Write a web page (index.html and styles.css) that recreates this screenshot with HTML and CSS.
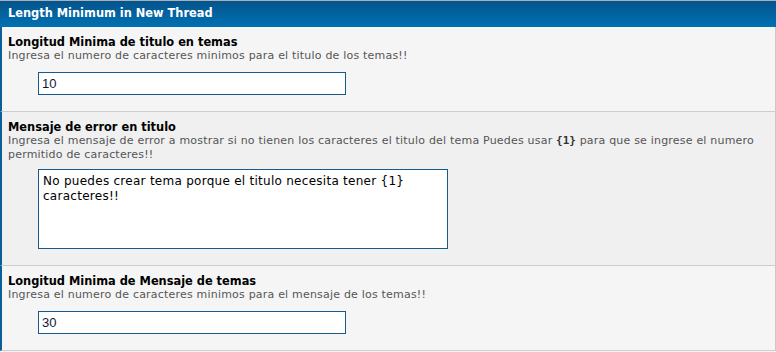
FILE: index.html
```html
<!DOCTYPE html>
<html>
<head>
<meta charset="utf-8">
<link rel="stylesheet" href="styles.css">
</head>
<body>
<div class="panel">
  <div class="panel-head">Length Minimum in New Thread</div>
  <div class="row row-light">
    <div class="row-title">Longitud Minima de titulo en temas</div>
    <div class="row-desc">Ingresa el numero de caracteres minimos para el titulo de los temas!!</div>
    <input class="field" type="text" value="10">
  </div>
  <div class="row row-dark">
    <div class="row-title">Mensaje de error en titulo</div>
    <div class="row-desc"><span>Ingresa el mensaje de error a mostrar si no tienen los caracteres el titulo del tema Puedes usar <b class="code">{1}</b> para que se ingrese el numero</span><br><span>permitido de caracteres!!</span></div>
    <textarea class="area">No puedes crear tema porque el titulo necesita tener {1} caracteres!!</textarea>
  </div>
  <div class="row row-light">
    <div class="row-title">Longitud Minima de Mensaje de temas</div>
    <div class="row-desc">Ingresa el numero de caracteres minimos para el mensaje de los temas!!</div>
    <input class="field" type="text" value="30">
  </div>
</div>
</body>
</html>
```
FILE: styles.css
```css
html, body {
  margin: 0;
  padding: 0;
  background: #f3f3f3;
}
.panel {
  width: 776px;
  border-top: 1px solid #a9b0b8;
  font-family: "DejaVu Sans", Verdana, sans-serif;
  color: #000;
}
.panel-head {
  height: 26px;
  line-height: 25px;
  padding-left: 8px;
  font-size: 11.4px;
  font-weight: bold;
  color: #fff;
  background: linear-gradient(#04548c, #0071b2);
}
.row {
  border-left: 2px solid #0c5e98;
  border-right: 1px solid #c9c9c9;
  border-bottom: 1px solid #cdcdcd;
  padding: 8px 8px 16px 6px;
  display: flex;
  flex-direction: column;
  align-items: flex-start;
}
.row-light { background: #f5f5f5; }
.row-dark { background: #f0f0f0; }
.row-title {
  font-size: 11.4px;
  font-weight: bold;
  line-height: 14px;
  color: #000;
}
.row-desc {
  font-size: 11px;
  letter-spacing: 0.2px;
  line-height: 14px;
  color: #555;
  white-space: nowrap;
}
.code {
  font-family: "DejaVu Sans Mono", monospace;
  font-size: 11px;
  line-height: 1;
  letter-spacing: 0;
  color: #333;
}
.field {
  box-sizing: border-box;
  width: 308px;
  height: 23px;
  margin: 9px 0 0 30px;
  padding: 0 3px;
  border: 1px solid #175a8c;
  background: #fff;
  font-family: "Liberation Sans", Arial, sans-serif;
  font-size: 13px;
  color: #14143c;
  outline: none;
}
.area {
  box-sizing: border-box;
  width: 410px;
  height: 80px;
  margin: 7px 0 0 30px;
  padding: 4px 4px;
  border: 1px solid #175a8c;
  background: #fff;
  font-family: "DejaVu Sans", Verdana, sans-serif;
  font-size: 12px;
  letter-spacing: 0.27px;
  line-height: 15px;
  color: #000;
  resize: none;
  outline: none;
}
```
